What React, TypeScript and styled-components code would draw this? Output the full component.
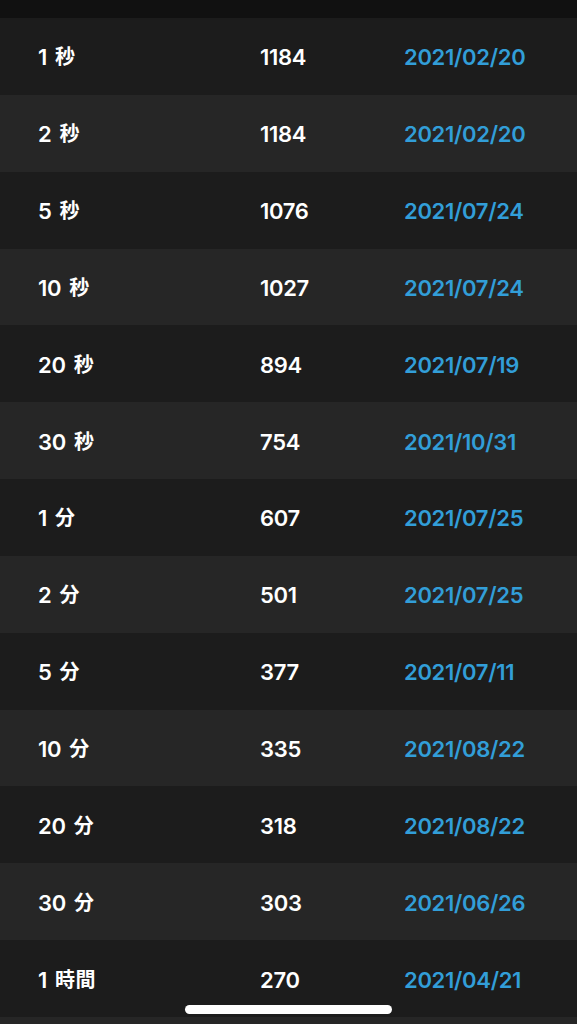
import React from "react";
import styled, { createGlobalStyle } from "styled-components";

const GlobalStyle = createGlobalStyle`
  html, body {
    margin: 0;
    padding: 0;
    background: #1c1c1c;
  }
  body {
    font-family: "Inter", "Noto Sans CJK JP", sans-serif;
  }
`;

const Screen = styled.div`
  width: 577px;
  height: 1024px;
  overflow: hidden;
  position: relative;
  display: flex;
  flex-direction: column;
  background: #1c1c1c;
`;

const TopBar = styled.div`
  height: 18px;
  flex: none;
  background: #111111;
`;

const Row = styled.div<{ $alt: boolean }>`
  height: 76.85px;
  box-sizing: border-box;
  padding-top: 2px;
  flex: none;
  display: grid;
  grid-template-columns: 222px 144px 1fr;
  align-items: center;
  padding-left: 38px;
  background: ${(p) => (p.$alt ? "#262626" : "#1c1c1c")};
  font-size: 22px;
  font-weight: 600;
  letter-spacing: -0.3px;
  line-height: 1;
`;

const Label = styled.span`
  color: #ffffff;
  display: flex;
  align-items: center;
  gap: 8px;
`;

const Kanji = styled.span`
  font-family: "Noto Sans CJK JP", sans-serif;
  font-size: 20px;
  font-weight: 700;
  letter-spacing: 0.5px;
  position: relative;
  top: -1px;
`;

const Value = styled.span`
  color: #ffffff;
`;

const DateText = styled.span`
  color: #329ed8;
`;

const HomeIndicator = styled.div`
  position: absolute;
  left: 185px;
  top: 1005px;
  width: 207px;
  height: 9px;
  border-radius: 5px;
  background: #ffffff;
`;

const rows: [string, string, string, string][] = [
  ["1", "秒", "1184", "2021/02/20"],
  ["2", "秒", "1184", "2021/02/20"],
  ["5", "秒", "1076", "2021/07/24"],
  ["10", "秒", "1027", "2021/07/24"],
  ["20", "秒", "894", "2021/07/19"],
  ["30", "秒", "754", "2021/10/31"],
  ["1", "分", "607", "2021/07/25"],
  ["2", "分", "501", "2021/07/25"],
  ["5", "分", "377", "2021/07/11"],
  ["10", "分", "335", "2021/08/22"],
  ["20", "分", "318", "2021/08/22"],
  ["30", "分", "303", "2021/06/26"],
  ["1", "時間", "270", "2021/04/21"],
  ["", "", "", ""],
];

export default function App() {
  return (
    <>
      <GlobalStyle />
      <Screen>
        <TopBar />
        {rows.map((r, i) => (
          <Row key={i} $alt={i % 2 === 1}>
            <Label>
              {r[0]}
              {r[1] && <Kanji>{r[1]}</Kanji>}
            </Label>
            <Value>{r[2]}</Value>
            <DateText>{r[3]}</DateText>
          </Row>
        ))}
        <HomeIndicator />
      </Screen>
    </>
  );
}
